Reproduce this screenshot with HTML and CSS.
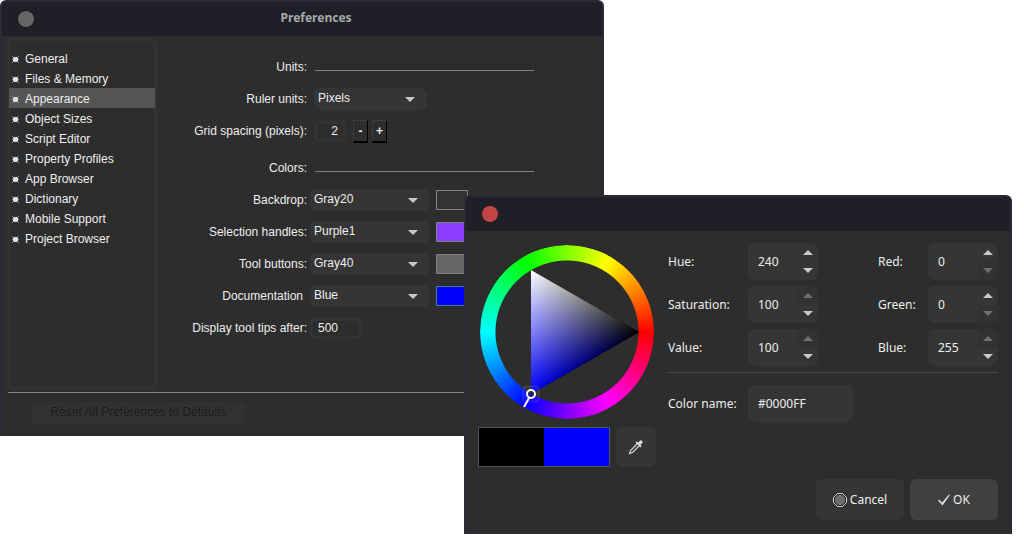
FILE: index.html
```
<!DOCTYPE html>
<html lang="en">
<head>
<meta charset="utf-8">
<title>Preferences</title>
<link rel="stylesheet" href="styles.css">
</head>
<body>
<svg class="defs" aria-hidden="true">
  <symbol id="bullet" viewBox="0 0 7 7"><path fill="#8a8a8a" d="M0 0h1v1H0zM6 0h1v1H6zM0 6h1v1H0zM6 6h1v1H6zM0 3h1v1H0zM6 3h1v1H6z"/><path fill="#dedede" d="M2 1h3v1h1v3H5v1H2V5H1V2h1z"/><path fill="#a8a8a8" d="M1 1h1v1H1zM5 1h1v1H5zM1 5h1v1H1zM5 5h1v1H5z"/></symbol>
  <symbol id="up" viewBox="0 0 10 5"><path fill="currentColor" d="M0 5 5 0l5 5z"/></symbol>
  <symbol id="down" viewBox="0 0 10 5"><path fill="currentColor" d="M0 0h10L5 5z"/></symbol>
</svg>

<main class="desktop">
<section class="window prefs" aria-label="Preferences">
  <header class="titlebar">
    <button class="close close-idle" aria-label="Close preferences"></button>
    <h1 class="title">Preferences</h1>
  </header>
  <div class="prefs-main">
    <nav class="sidebar">
      <a class="item" href="#general"><svg><use href="#bullet"/></svg>General</a>
      <a class="item" href="#files"><svg><use href="#bullet"/></svg>Files &amp; Memory</a>
      <a class="item item-on" href="#appearance"><svg><use href="#bullet"/></svg>Appearance</a>
      <a class="item" href="#sizes"><svg><use href="#bullet"/></svg>Object Sizes</a>
      <a class="item" href="#script"><svg><use href="#bullet"/></svg>Script Editor</a>
      <a class="item" href="#profiles"><svg><use href="#bullet"/></svg>Property Profiles</a>
      <a class="item" href="#app"><svg><use href="#bullet"/></svg>App Browser</a>
      <a class="item" href="#dictionary"><svg><use href="#bullet"/></svg>Dictionary</a>
      <a class="item" href="#mobile"><svg><use href="#bullet"/></svg>Mobile Support</a>
      <a class="item" href="#project"><svg><use href="#bullet"/></svg>Project Browser</a>
    </nav>
    <form class="form">
      <div class="row"><span class="label">Units:</span><span class="rule"></span></div>
      <div class="row"><label class="label" for="ruler">Ruler units:</label><select class="select select-short" id="ruler"><option>Pixels</option></select></div>
      <div class="row"><label class="label" for="grid">Grid spacing (pixels):</label><input class="entry entry-grid" id="grid" value="2"><span class="steps"><button class="step" type="button">-</button><button class="step" type="button">+</button></span></div>
      <div class="row row-section"><span class="label">Colors:</span><span class="rule"></span></div>
      <div class="row row-color"><label class="label" for="backdrop">Backdrop:</label><select class="select" id="backdrop"><option>Gray20</option></select><button class="swatch gray20" type="button" aria-label="Backdrop color"></button></div>
      <div class="row row-color"><label class="label" for="handles">Selection handles:</label><select class="select" id="handles"><option>Purple1</option></select><button class="swatch purple1" type="button" aria-label="Handle color"></button></div>
      <div class="row row-color"><label class="label" for="tools">Tool buttons:</label><select class="select" id="tools"><option>Gray40</option></select><button class="swatch gray40" type="button" aria-label="Tool button color"></button></div>
      <div class="row row-color"><label class="label label-doc" for="docs">Documentation</label><select class="select" id="docs"><option>Blue</option></select><button class="swatch blue" type="button" aria-label="Documentation color"></button></div>
      <div class="row row-color"><label class="label" for="tips">Display tool tips after:</label><input class="entry entry-tips" id="tips" value="500"></div>
    </form>
  </div>
  <footer class="prefs-foot"><button class="reset" type="button" disabled>Reset All Preferences to Defaults</button></footer>
</section>

<section class="window picker" role="dialog" aria-label="Color picker">
  <header class="titlebar"><button class="close close-live" aria-label="Close color picker"></button></header>
  <div class="picker-body">
    <div class="chooser">
      <div class="wheel">
        <div class="ring"></div>
        <svg class="triangle" viewBox="0 0 174 174" aria-hidden="true">
          <defs>
            <linearGradient id="blue-axis" gradientUnits="userSpaceOnUse" x1="51" y1="0" x2="159" y2="0"><stop stop-color="#00f"/><stop offset="1" stop-color="#000"/></linearGradient>
            <linearGradient id="white-axis" gradientUnits="userSpaceOnUse" x1="105" y1="118" x2="51" y2="25"><stop stop-color="#000"/><stop offset="1" stop-color="#ff0"/></linearGradient>
          </defs>
          <g class="blend">
            <path fill="url(#blue-axis)" d="M51 25 159 87 51 149z"/>
            <path class="screen" fill="url(#white-axis)" d="M51 25 159 87 51 149z"/>
          </g>
          <rect x="43" y="141" width="16" height="16" rx="3" fill="#fff" fill-opacity=".06" stroke="#fff" stroke-opacity=".12"/>
          <path d="m49 153-5 9" stroke="#fff" stroke-width="2"/>
          <circle cx="51" cy="149" r="4" fill="#2a2a4a" stroke="#fff" stroke-width="2"/>
          <path d="M50 149h2v2h-2z" fill="#00f"/>
        </svg>
      </div>
      <div class="samples">
        <div class="compare"><span class="old"></span><span class="new"></span></div>
        <button class="pick" type="button" aria-label="Pick a color from the screen">
          <svg width="16" height="16" viewBox="0 0 16 16" fill="none"><path d="M9 5 2.500 11.500 1.500 14.500 4.500 13.500 11 7" stroke="#d8d8d8" stroke-width="1.200"/><path d="m7.500 3.500 1.500-1 1.500 1L12 1.500c1-1 3.500.8 2.500 2.500L12.500 5.500l1 1.500-1 1.500z" fill="#d8d8d8"/></svg>
        </button>
      </div>
    </div>
    <div class="values">
      <div class="columns">
        <div class="column">
          <div class="field"><label class="name wide" for="hue">Hue:</label><span class="spin"><input id="hue" value="240"><span class="arrows"><button type="button" aria-label="Raise hue"><svg><use href="#up"/></svg></button><button type="button" aria-label="Lower hue"><svg><use href="#down"/></svg></button></span></span></div>
          <div class="field"><label class="name wide" for="sat">Saturation:</label><span class="spin"><input id="sat" value="100"><span class="arrows"><button type="button" disabled aria-label="Raise saturation"><svg><use href="#up"/></svg></button><button type="button" aria-label="Lower saturation"><svg><use href="#down"/></svg></button></span></span></div>
          <div class="field"><label class="name wide" for="val">Value:</label><span class="spin"><input id="val" value="100"><span class="arrows"><button type="button" disabled aria-label="Raise value"><svg><use href="#up"/></svg></button><button type="button" aria-label="Lower value"><svg><use href="#down"/></svg></button></span></span></div>
        </div>
        <div class="column">
          <div class="field"><label class="name" for="red">Red:</label><span class="spin"><input id="red" value="0"><span class="arrows"><button type="button" aria-label="Raise red"><svg><use href="#up"/></svg></button><button type="button" disabled aria-label="Lower red"><svg><use href="#down"/></svg></button></span></span></div>
          <div class="field"><label class="name" for="green">Green:</label><span class="spin"><input id="green" value="0"><span class="arrows"><button type="button" aria-label="Raise green"><svg><use href="#up"/></svg></button><button type="button" disabled aria-label="Lower green"><svg><use href="#down"/></svg></button></span></span></div>
          <div class="field"><label class="name" for="blue">Blue:</label><span class="spin"><input id="blue" value="255"><span class="arrows"><button type="button" disabled aria-label="Raise blue"><svg><use href="#up"/></svg></button><button type="button" aria-label="Lower blue"><svg><use href="#down"/></svg></button></span></span></div>
        </div>
      </div>
      <hr class="divider">
      <div class="field"><label class="name wide" for="hex">Color name:</label><input class="hex" id="hex" value="#0000FF"></div>
    </div>
  </div>
  <footer class="picker-foot">
    <button class="action" type="button"><svg width="14" height="14" viewBox="0 0 14 14"><path d="M4.500.5h5l4 4v5l-4 4h-5l-4-4v-5z" fill="#2d2d2d" stroke="#d0d0d0"/><path d="M5 2h4l3 3v4l-3 3H5L2 9V5z" fill="#6c6c6c"/></svg>Cancel</button>
    <button class="action action-main" type="button"><svg class="tick" width="12" height="12" viewBox="0 0 12 12"><path d="M0 6.500 1 5.500 4 8.500 11 .5 12 1 4.500 11.500z" fill="#dedede"/></svg>OK</button>
  </footer>
</section>
</main>
</body>
</html>
```
FILE: styles.css
```
* { box-sizing: border-box; }
body { margin: 0; background: #fff; color: #eee; }
button, input, select { margin: 0; padding: 0; border: 0; outline: 0; color: inherit; font: inherit; background: none; appearance: none; }
button { display: flex; align-items: center; justify-content: center; }
.defs { position: absolute; width: 0; height: 0; }

/* Windows */
.desktop { position: relative; min-height: 100vh; overflow: hidden; }
.window { position: absolute; background: #2d2d2d; border: 2px solid #2a2a37; border-bottom-width: 1px; border-radius: 6px 6px 0 0; overflow: hidden; }
.prefs { top: 0; left: 0; width: 59%; font: 12px/20px "Liberation Sans", sans-serif; }
.picker { top: 195px; left: 464px; right: 12px; font: 12px/20px "Noto Sans", sans-serif; }
.titlebar { display: flex; align-items: center; height: 34px; padding: 0 16px; background: #1f1f28; }
.title { flex: 1; margin: 0; padding: 0 0 2px 12px; text-align: center; color: #a9a9a9; font: bold 12px/20px "Noto Sans", sans-serif; }
.close { width: 16px; height: 16px; border-radius: 50%; }
.close-idle { background: #666; box-shadow: 0 0 0 1px #1a1a1a; }
.close-live { background: #c44446; }

/* Preferences */
.prefs-main { display: flex; margin-left: 5px; padding: 2px 0; }
.sidebar { flex: none; width: 150px; min-height: 352px; padding-top: 7px; border: 3px solid #333; border-radius: 5px; }
.item { display: flex; align-items: center; gap: 6px; margin: 0 -1px; padding: 2px 0 0 3px; color: #eee; line-height: 18px; text-decoration: none; }
.item svg { width: 7px; height: 7px; }
.item-on { background: #555; }
.form { flex: 1; display: flex; flex-direction: column; gap: 10px; padding-top: 18px; }
.row { display: flex; align-items: center; gap: 7px; height: 22px; }
.row-section { margin-top: 5px; }
.row-color { gap: 3px; }
.label { flex: none; width: 150px; text-align: right; white-space: nowrap; }
.label-doc { padding-right: 4px; }
.rule { width: 219px; height: 1px; margin: 7px 0 0 1px; background: #828282; }
.select { width: 120px; height: 22px; padding: 0 4px 2px; border-radius: 6px; background: #353535 url("data:image/svg+xml,%3Csvg xmlns='http://www.w3.org/2000/svg' width='10' height='5'%3E%3Cpath fill='%23c8c8c8' d='M0 0h10L5 5z'/%3E%3C/svg%3E") no-repeat right 12px center; }
.select-short { width: 113px; }
.swatch { width: 32px; height: 20px; margin-left: 3px; border: 1px solid #828282; }
.gray20 { background: #333; }
.purple1 { background: #8b3dff; }
.gray40 { background: #666; }
.blue { background: #00f; border-color: #3c7f7f; }
.entry { height: 21px; border: 3px solid #333; border-radius: 5px; }
.entry-grid { width: 32px; padding-right: 5px; text-align: right; }
.entry-tips { width: 52px; padding-left: 5px; }
.steps { display: flex; gap: 4px; }
.step { width: 15px; height: 22px; border: 1px solid #3c3c3c; border-right-color: #000; border-bottom-color: #000; box-shadow: 0 1px #000; font-weight: bold; }
.prefs-foot { margin-left: 6px; padding: 9px 24px 10px; border-top: 1px solid #828282; }
.reset { min-width: 213px; height: 23px; padding: 0 16px 3px; border-radius: 6px; background: #313131; color: #1b1b1b; text-shadow: 1px 1px #383838; }

/* Color picker */
.picker-body { display: flex; gap: 12px; padding: 12px; }
.chooser { flex: none; width: 178px; }
.wheel { display: grid; width: 174px; height: 174px; margin: 2px 2px 8px; }
.ring, .triangle { grid-area: 1 / 1; width: 174px; height: 174px; }
.ring { border-radius: 50%; background: conic-gradient(from 90deg, #f00, #f0f, #00f, #0ff, #0f0, #ff0, #f00); mask: radial-gradient(circle, transparent 71px, #000 72px); }
.triangle { z-index: 1; }
.blend { isolation: isolate; }
.screen { mix-blend-mode: screen; }
.samples { display: flex; gap: 6px; }
.compare { display: flex; flex: 1; height: 40px; border: 1px solid #555; }
.old, .new { flex: 1; }
.old { background: #000; }
.new { background: #00f; }
.pick { width: 40px; height: 40px; border-radius: 6px; background: #353535; }
.values { flex: 1; }
.columns { display: flex; justify-content: space-between; }
.column { display: grid; gap: 6px; }
.field { display: flex; align-items: center; }
.name { width: 50px; }
.wide { width: 80px; }
.spin { display: flex; width: 70px; height: 37px; border-radius: 6px; background: #353535; overflow: hidden; }
.spin input { width: 50px; padding-left: 10px; }
.arrows { display: grid; grid-template-rows: 1fr 1fr; width: 20px; }
.arrows button { color: #c8c8c8; }
.arrows button:disabled { color: #707070; background: #323232; }
.arrows svg { width: 10px; height: 5px; }
.divider { height: 1px; margin: 6px 0 12px; border: 0; background: #4a4a4a; }
.hex { width: 106px; height: 37px; padding-left: 10px; border-radius: 6px; background: #353535; }
.picker-foot { display: flex; justify-content: flex-end; gap: 6px; padding: 0 12px 13px; }
.action { gap: 3px; width: 88px; height: 41px; border-radius: 6px; background: #353535; }
.action-main { background: #404040; }
```
